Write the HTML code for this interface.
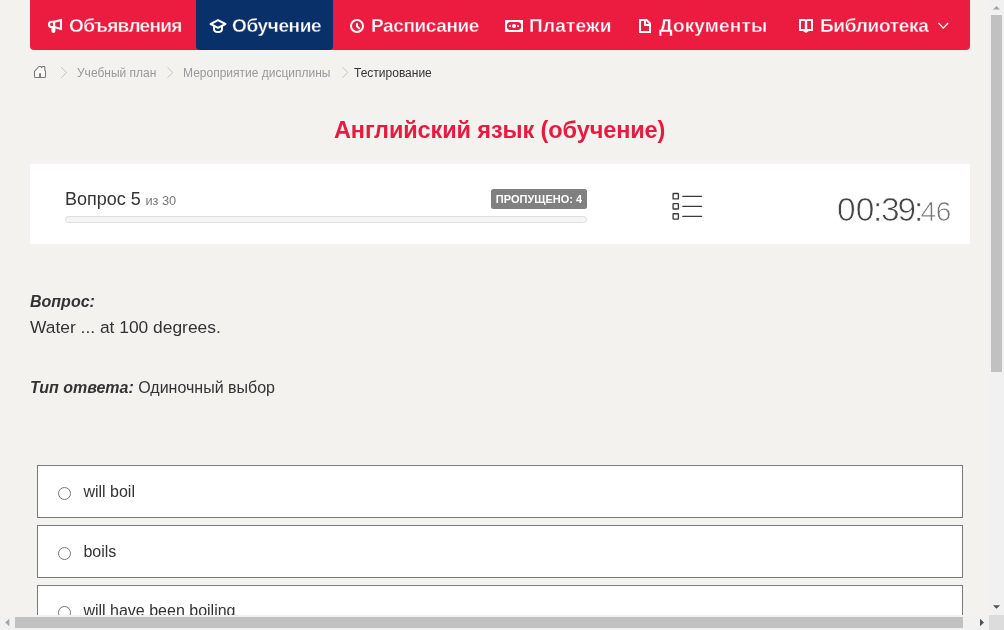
<!DOCTYPE html>
<html lang="ru">
<head>
<meta charset="utf-8">
<title>Английский язык (обучение)</title>
<style>
html,body{margin:0;padding:0;}
html{overflow:hidden;background:#f3f2ee;}
body{width:1004px;height:630px;position:relative;overflow:hidden;font-family:"Liberation Sans",sans-serif;color:#333;}
#page{position:absolute;left:0;top:0;width:1004px;height:630px;will-change:transform;}
.abs{position:absolute;white-space:nowrap;}
svg{position:absolute;left:0;top:0;overflow:visible;}
#nav{position:absolute;left:30px;top:0;width:940px;height:50px;background:#ec1b40;border-radius:0 0 4px 4px;}
#act{position:absolute;left:196px;top:0;width:137px;height:50px;background:#0a306a;border-radius:0 0 4px 4px;}
.nt{-webkit-text-stroke:.3px #ec1b40;position:absolute;top:13.5px;height:24px;line-height:24px;font-family:"Liberation Sans",sans-serif;font-weight:bold;font-size:19px;color:#fff;white-space:nowrap;}
.bc{position:absolute;top:65px;height:16px;line-height:16px;font-size:12px;color:#999;white-space:nowrap;}
#title{position:absolute;left:0;width:999.3px;top:113px;height:34px;line-height:34px;text-align:center;font-weight:bold;font-size:23.5px;letter-spacing:-.1px;color:#e81a40;white-space:nowrap;}
#panel{position:absolute;left:30px;top:164px;width:940px;height:80px;background:#fff;}
.c{margin:0 -1.3px;}
.opt{position:absolute;left:37px;width:924px;height:51px;border:1px solid #7a7a7a;background:#fff;}
.radio{position:absolute;left:20px;top:21px;width:11px;height:11px;border:1px solid #767676;border-radius:50%;background:#fff;}
.ol{position:absolute;left:45.4px;top:15px;height:22px;line-height:22px;font-size:16px;color:#333;white-space:nowrap;}
</style>
</head>
<body>
<div id="page">
<div id="nav"></div>
<div id="act"></div>
<span class="nt" style="left:69px;letter-spacing:-.65px">Объявления</span>
<span class="nt" style="left:232px;letter-spacing:-.37px;-webkit-text-stroke-color:#0a306a">Обучение</span>
<span class="nt" style="left:371px;letter-spacing:-.38px">Расписание</span>
<span class="nt" style="left:529px;letter-spacing:.24px">Платежи</span>
<span class="nt" style="left:659px;letter-spacing:.16px">Документы</span>
<span class="nt" style="left:820px;letter-spacing:-.29px">Библиотека</span>

<svg id="icons" width="1004" height="100" viewBox="0 0 1004 100">
 <!-- megaphone -->
 <g fill="none" stroke="#fff" stroke-width="2" stroke-linejoin="round" stroke-linecap="round">
  <path d="M54.1,21.8 H51.6 a2.6,2.6 0 0 0 0,5.2 H54.1 Z"/>
  <path d="M54.1,21.8 L61,20 V29 L54.1,27 Z" stroke-linejoin="miter"/>
  <path d="M53.4,28.5 V31" stroke-width="4"/>
 </g>
 <!-- graduation cap -->
 <g fill="none" stroke="#fff" stroke-width="2" stroke-linejoin="round" stroke-linecap="round">
  <path d="M210.6,24 L218,20.2 L225.4,24 L218,27.8 Z"/>
  <path d="M214,26.5 V29 C214,33 222,33 222,29 V26.5"/>
 </g>
 <!-- clock -->
 <g fill="none" stroke="#fff" stroke-width="2" stroke-linejoin="round" stroke-linecap="round">
  <circle cx="357" cy="26" r="6"/>
  <path d="M357,24 V26.2 L359.2,28.4"/>
 </g>
 <!-- money -->
 <path fill="#fff" fill-rule="evenodd" d="M505,20 H523 V32 H505 Z M509,22 L507,24 V28 L509,30 H519 L521,28 V24 L519,22 Z"/>
 <circle cx="514" cy="26" r="2" fill="#fff"/>
 <rect x="509" y="25" width="2" height="2" fill="#fff" opacity=".85"/>
 <rect x="517" y="25" width="2" height="2" fill="#fff" opacity=".85"/>
 <!-- file -->
 <path fill="#fff" fill-rule="evenodd" d="M639,19 H647 L651,23 V33 H639 Z M641,21 H644 V26 H649 V31 H641 Z M646,21 L649,24 H646 Z"/>
 <!-- book -->
 <path fill="#fff" fill-rule="evenodd" d="M799,19 H805 L806,19.7 L807,19 H813 V31 H809 L806,33 L803,31 H799 Z M801,21 H804.8 V29 H801 Z M807.2,21 H811 V29 H807.2 Z"/>
 <!-- chevron down -->
 <path d="M938.5,23 L943.3,28.2 L948.1,23" fill="none" stroke="#fff" stroke-width="1.2"/>
 <!-- home -->
 <path d="M34.5,71.3 L38.9,66.5 H40.8 L41.6,67.6 L42.4,66.5 H44.3 Q44.8,66.5 44.8,67 V70.3 L45.5,71.2 V76.5 Q45.5,77.5 44.5,77.5 H35.5 Q34.5,77.5 34.5,76.5 Z" fill="#f9f9f7" stroke="#7b7b7b" stroke-width="1.1" stroke-linejoin="round"/>
 <rect x="39.1" y="73.2" width="1.9" height="4.3" fill="#7b7b7b"/>
 <!-- breadcrumb chevrons -->
 <g fill="none" stroke="#bdbdbd" stroke-width=".9">
  <path d="M61.3,67.3 L66.6,72.5 L61.3,77.7"/>
  <path d="M167.5,67.3 L172.8,72.5 L167.5,77.7"/>
  <path d="M342.5,67.3 L347.8,72.5 L342.5,77.7"/>
 </g>
</svg>

<span class="bc" style="left:77px">Учебный план</span>
<span class="bc" style="left:183px">Мероприятие дисциплины</span>
<span class="bc" style="left:354px;color:#333">Тестирование</span>

<div id="title">Английский язык (обучение)</div>

<div id="panel"></div>
<span class="abs" style="left:65px;top:187px;font-size:18px;line-height:24px;color:#333">Вопрос 5 <span style="font-size:12.8px;color:#777;margin-left:-.4px">из 30</span></span>
<div class="abs" style="left:65px;top:216px;width:520px;height:5px;border:1px solid #ddd;border-radius:4px;background:#f5f5f5"></div>
<span class="abs" style="left:491px;top:189px;width:96px;height:20px;line-height:20px;background:#808080;border-radius:2.5px;color:#fff;font-size:11px;font-weight:bold;text-align:center">ПРОПУЩЕНО: 4</span>
<svg width="1004" height="300" viewBox="0 0 1004 300">
 <g fill="none" stroke="#3a3a3a" stroke-width="1.35">
  <rect x="673.1" y="193.5" width="5.3" height="5.4" rx=".5"/>
  <rect x="673.1" y="203.6" width="5.3" height="5.4" rx=".5"/>
  <rect x="673.1" y="213.7" width="5.3" height="5.4" rx=".5"/>
  <path d="M682.8,196.3 H701.6 M682.8,206.3 H701.6 M682.8,216.4 H701.6" stroke-linecap="round" stroke-width="1.3"/>
 </g>
</svg>
<span class="abs" id="timer" style="left:837px;top:189px;font-size:33.5px;line-height:42px;color:#444;-webkit-text-stroke:.7px #fff">00<span class="c">:</span><span style="letter-spacing:-2.2px">3</span>9<span style="margin:0 -2.6px 0 -2.2px">:</span><span style="font-size:28px;color:#777;letter-spacing:-.5px">46</span></span>

<span class="abs" style="left:30px;top:291px;font-size:16px;line-height:22px;font-weight:bold;font-style:italic">Вопрос:</span>
<span class="abs" style="left:30px;top:315px;font-size:17.4px;line-height:24px">Water ... at 100 degrees.</span>
<span class="abs" style="left:30px;top:377px;font-size:16px;line-height:22px"><b><i>Тип ответа:</i></b> Одиночный выбор</span>

<div class="opt" style="top:465px"><div class="radio"></div><span class="ol">will boil</span></div>
<div class="opt" style="top:525px"><div class="radio"></div><span class="ol">boils</span></div>
<div class="opt" style="top:585px"><div class="radio" style="top:20px"></div><span class="ol" style="top:14px">will have been boiling</span></div>

<!-- scrollbars -->
<div class="abs" style="left:989px;top:0;width:15px;height:615px;background:#f1f1f1"></div>
<div class="abs" style="left:991px;top:15px;width:11px;height:357px;background:#c1c1c1"></div>
<div class="abs" style="left:0;top:615px;width:989px;height:15px;background:#f1f1f1"></div>
<div class="abs" style="left:15px;top:617px;width:948px;height:11px;background:#c1c1c1"></div>
<div class="abs" style="left:989px;top:615px;width:15px;height:15px;background:#dcdcdc"></div>
<svg width="1004" height="630" viewBox="0 0 1004 630">
 <path d="M993,9.5 L996.5,6 L1000,9.5 Z" fill="#a3a3a3"/>
 <path d="M993,605.3 L996.5,608.8 L1000,605.3 Z" fill="#505050"/>
 <path d="M9.3,618.8 L5.2,622.5 L9.3,626.2 Z" fill="#a3a3a3"/>
 <path d="M980,618.8 L984,622.5 L980,626.2 Z" fill="#505050"/>
</svg>
</div>
</body>
</html>
